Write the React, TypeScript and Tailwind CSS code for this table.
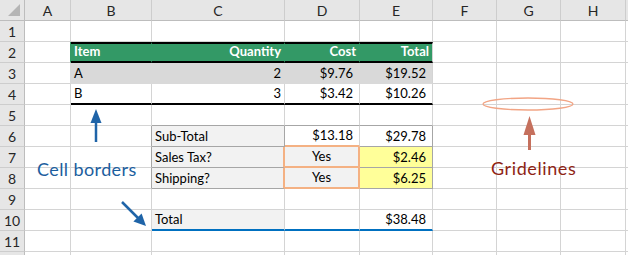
import React from "react";

type CP = { t?: React.ReactNode; r?: string; b?: string; x?: string };

const DR = "border-r border-r-[#d4d4d4]";
const DB = "border-b border-b-[#d4d4d4]";
const GR = "border-r border-r-[#a6a6a6]";
const GB = "border-b border-b-[#a6a6a6]";
const OR = "border-r-2 border-r-[#f4b183]";
const OB = "border-b-2 border-b-[#f4b183]";
const KB = "border-b-2 border-b-black";
const BB = "border-b-2 border-b-[#0070c0]";

function Cell({ t, r = DR, b = DB, x = "" }: CP) {
  return (
    <div
      className={`h-[21px] flex items-end pb-[2px] pl-[3px] leading-[16px] text-[13px] text-black whitespace-nowrap overflow-hidden ${r} ${b} ${x}`}
    >
      {t}
    </div>
  );
}

function RowHdr({ n }: { n?: number }) {
  return (
    <div className="h-[21px] flex items-center justify-center bg-[#e6e6e6] border-r border-r-[#bdbdbd] border-b border-b-[#cdcdcd] text-[14px] text-[#262626]">
      {n}
    </div>
  );
}

function ColHdr({ l }: { l: string }) {
  return (
    <div className="h-[21px] flex items-center justify-center bg-[#e6e6e6] border-r border-r-[#cdcdcd] border-b border-b-[#bdbdbd] text-[14px] text-[#262626]">
      {l}
    </div>
  );
}

const GREEN = "bg-[#339966] text-white font-bold border-t-2 border-t-black";
const G3 = "bg-[#d9d9d9]";
const F2 = "bg-[#f2f2f2]";
const YL = "bg-[#ffff99]";
const RJ = "justify-end pr-[3px]";
const RC = "justify-end pr-[6px]";

export default function App() {
  return (
    <div className="relative w-[628px] h-[255px] overflow-hidden bg-white font-['Lato',_sans-serif]">
      <div className="grid grid-cols-[25px_46px_81px_133px_75px_73px_64px_64px_65px_1fr] w-[628px]">
        {/* header */}
        <div className="h-[21px] bg-[#e6e6e6] border-r border-r-[#bdbdbd] border-b border-b-[#bdbdbd] flex items-end justify-end pr-[4px] pb-[4px]">
          <svg width="12" height="12" viewBox="0 0 12 12">
            <polygon points="0,12 12,12 12,0" fill="#b5b5b5" />
          </svg>
        </div>
        {["A", "B", "C", "D", "E", "F", "G", "H", ""].map((l, i) => (
          <ColHdr key={i} l={l} />
        ))}

        {/* row 1 */}
        <RowHdr n={1} />
        <Cell /><Cell /><Cell /><Cell /><Cell /><Cell /><Cell /><Cell /><Cell />

        {/* row 2 */}
        <RowHdr n={2} />
        <Cell r="border-r border-r-[#339966]" />
        <Cell t="Item" r="border-r border-r-[#339966]" b={KB} x={GREEN} />
        <Cell t="Quantity" r="border-r border-r-[#339966]" b={KB} x={`${GREEN} ${RJ}`} />
        <Cell t="Cost" r="border-r border-r-[#339966]" b={KB} x={`${GREEN} ${RJ}`} />
        <Cell t="Total" b={KB} x={`${GREEN} ${RJ}`} />
        <Cell /><Cell /><Cell /><Cell />

        {/* row 3 */}
        <RowHdr n={3} />
        <Cell r="border-r border-r-[#d9d9d9]" />
        <Cell t="A" r="border-r border-r-[#d9d9d9]" b="border-b border-b-[#d9d9d9]" x={G3} />
        <Cell t="2" r="border-r border-r-[#d9d9d9]" b="border-b border-b-[#d9d9d9]" x={`${G3} ${RJ}`} />
        <Cell t="$9.76" r="border-r border-r-[#d9d9d9]" b="border-b border-b-[#d9d9d9]" x={`${G3} ${RC}`} />
        <Cell t="$19.52" b="border-b border-b-[#d9d9d9]" x={`${G3} ${RC}`} />
        <Cell /><Cell /><Cell /><Cell />

        {/* row 4 */}
        <RowHdr n={4} />
        <Cell />
        <Cell t="B" b={KB} />
        <Cell t="3" b={KB} x={RJ} />
        <Cell t="$3.42" b={KB} x={RC} />
        <Cell t="$10.26" b={KB} x={RC} />
        <Cell /><Cell /><Cell /><Cell />

        {/* row 5 */}
        <RowHdr n={5} />
        <Cell /><Cell />
        <Cell b={GB} /><Cell b={GB} /><Cell b={GB} />
        <Cell /><Cell /><Cell /><Cell />

        {/* row 6 */}
        <RowHdr n={6} />
        <Cell />
        <Cell r={GR} />
        <Cell t="Sub-Total" r={GR} b={GB} x={F2} />
        <Cell t="$13.18" b={OB} x={RC} />
        <Cell t="$29.78" r={GR} b={GB} x={RC} />
        <Cell /><Cell /><Cell /><Cell />

        {/* row 7 */}
        <RowHdr n={7} />
        <Cell />
        <Cell r={GR} />
        <Cell t="Sales Tax?" r={OR} b={GB} x={F2} />
        <Cell t="Yes" r={OR} b={OB} x={`${F2} justify-center pr-[3px]`} />
        <Cell t="$2.46" r={GR} b={GB} x={`${YL} ${RC}`} />
        <Cell /><Cell /><Cell /><Cell />

        {/* row 8 */}
        <RowHdr n={8} />
        <Cell />
        <Cell r={GR} />
        <Cell t="Shipping?" r={OR} b={GB} x={F2} />
        <Cell t="Yes" r={OR} b={OB} x={`${F2} justify-center pr-[3px]`} />
        <Cell t="$6.25" r={GR} b={GB} x={`${YL} ${RC}`} />
        <Cell /><Cell /><Cell /><Cell />

        {/* row 9 */}
        <RowHdr n={9} />
        <Cell /><Cell /><Cell /><Cell /><Cell /><Cell /><Cell /><Cell /><Cell />

        {/* row 10 */}
        <RowHdr n={10} />
        <Cell /><Cell />
        <Cell t="Total" b={BB} x={F2} />
        <Cell b={BB} />
        <Cell t="$38.48" b={BB} x={RC} />
        <Cell /><Cell /><Cell /><Cell />

        {/* row 11 */}
        <RowHdr n={11} />
        <Cell /><Cell /><Cell /><Cell /><Cell /><Cell /><Cell /><Cell /><Cell />

        {/* row 12 (cut off at the bottom edge) */}
        <RowHdr />
        <Cell /><Cell /><Cell /><Cell /><Cell /><Cell /><Cell /><Cell /><Cell />
      </div>

      {/* annotations */}
      <svg className="absolute left-0 top-0 pointer-events-none" width="628" height="255" viewBox="0 0 628 255">
        {/* blue up arrow */}
        <line x1="96" y1="142" x2="96" y2="120" stroke="#1f64a8" strokeWidth="2.5" />
        <polygon points="90.5,123 101.5,123 96,109" fill="#1f64a8" />
        {/* diagonal arrow */}
        <line x1="122" y1="202" x2="139" y2="219" stroke="#1f64a8" strokeWidth="2.5" />
        <polygon points="146,226 141.6,213.4 133.4,221.6" fill="#1f64a8" />
        {/* ellipse */}
        <ellipse cx="528" cy="104" rx="45" ry="6" fill="none" stroke="#f2a585" strokeWidth="1.3" />
        {/* salmon arrow */}
        <line x1="529.5" y1="150" x2="529.5" y2="132" stroke="#c5705d" strokeWidth="3" />
        <polygon points="523.5,135 535.5,135 529.5,116" fill="#c5705d" />
      </svg>
      <div className="absolute left-[37px] top-[160px] text-[18px] leading-[18px] text-[#1c5e9e] tracking-[0.4px] whitespace-nowrap">
        Cell borders
      </div>
      <div className="absolute left-[491px] top-[159px] text-[18px] leading-[18px] text-[#8e2414] tracking-[0.6px] whitespace-nowrap">
        Gridelines
      </div>
    </div>
  );
}
